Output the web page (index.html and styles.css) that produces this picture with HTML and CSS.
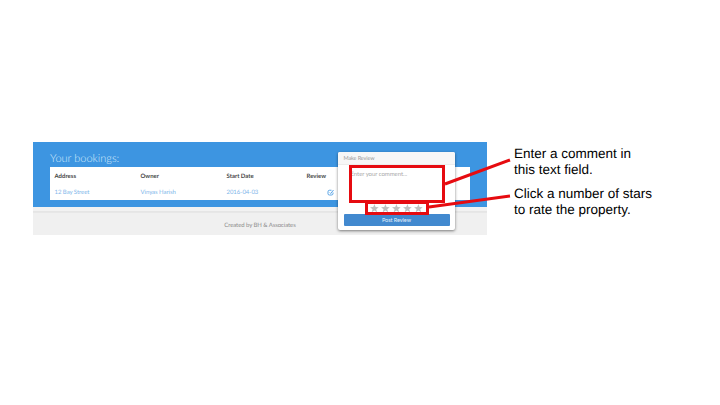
FILE: index.html
```html
<!DOCTYPE html>
<html lang="en">
<head>
<meta charset="utf-8">
<title>Make a review</title>
<link rel="stylesheet" href="styles.css">
</head>
<body>
<main class="slide">
  <section class="app">
    <div class="hero">
      <h1>Your bookings:</h1>
      <table class="bookings">
        <thead><tr><th class="address">Address</th><th class="owner">Owner</th><th class="date">Start Date</th><th>Review</th></tr></thead>
        <tbody><tr><td>12 Bay Street</td><td>Vinyas Harish</td><td>2016-04-03</td><td class="edit-cell"><svg class="edit" viewBox="0 0 14 14"><path d="M9 2.500H5Q2 2.500 2 5.500v4Q2 12 5 12h4q3 0 3-3V7M5.500 7l2 2L13 2"/></svg></td></tr></tbody>
      </table>
    </div>
    <footer><p>Created by BH &amp; Associates</p></footer>
    <form class="popover">
      <h2>Make Review</h2>
      <div class="popover-body">
        <div class="comment">Enter your comment...</div>
        <div class="stars">
          <svg viewBox="0 0 20 20"><path d="M10 0l2.6 6.8 7.3.4-5.700 4.600 1.900 7L10 14.900l-6.100 3.900 1.900-7L.1 7.200l7.300-.4z"/></svg>
          <svg viewBox="0 0 20 20"><path d="M10 0l2.6 6.8 7.3.4-5.700 4.600 1.900 7L10 14.900l-6.100 3.900 1.900-7L.1 7.200l7.300-.4z"/></svg>
          <svg viewBox="0 0 20 20"><path d="M10 0l2.6 6.8 7.3.4-5.700 4.600 1.900 7L10 14.900l-6.100 3.900 1.900-7L.1 7.200l7.300-.4z"/></svg>
          <svg viewBox="0 0 20 20"><path d="M10 0l2.6 6.8 7.3.4-5.700 4.600 1.900 7L10 14.900l-6.100 3.900 1.900-7L.1 7.200l7.300-.4z"/></svg>
          <svg viewBox="0 0 20 20"><path d="M10 0l2.6 6.8 7.3.4-5.700 4.600 1.900 7L10 14.900l-6.100 3.900 1.900-7L.1 7.200l7.300-.4z"/></svg>
        </div>
        <button type="button">Post Review</button>
      </div>
    </form>
  </section>
  <aside class="notes">
    <p>Enter a comment in<br>this text field.</p>
    <p>Click a number of stars<br>to rate the property.</p>
  </aside>
  <svg class="callouts" viewBox="0 0 720 405">
    <path d="M445 184L510 160M429 207L510 196"/>
    <rect x="350.500" y="166.500" width="93" height="35"/>
    <rect x="366.500" y="202.500" width="61" height="11"/>
  </svg>
</main>
</body>
</html>
```
FILE: styles.css
```css
* { box-sizing: border-box; }
body { margin: 0; background: #fff; text-rendering: geometricPrecision; }
h1, h2, p { margin: 0; font-weight: 400; }
.slide {
  position: relative;
  display: flex;
  align-items: flex-start;
  width: 720px;
  height: 405px;
  padding: 142px 0 0 33px;
  overflow: hidden;
}
.app {
  position: relative;
  width: 454px;
  height: 93px;
  background: #f0f0f0;
  font-family: Lato, sans-serif;
}
.hero { height: 65px; padding: 9px 17px 0; background: #3d95e1; }
h1 { height: 16px; font-size: 11px; line-height: 16px; font-weight: 300; color: #d3e9fb; }
.bookings {
  width: 420px;
  height: 33px;
  table-layout: fixed;
  border-collapse: collapse;
  background: #fff;
  font-size: 6px;
  line-height: 8px;
  text-align: left;
}
.bookings th { height: 17px; padding: 3px 0 0 4.500px; color: #484848; font-weight: 700; }
.bookings td { height: 16px; padding: 1px 0 0 4.500px; color: #7fb7ea; }
.bookings td { letter-spacing: -.05px; }
.address, .owner { width: 86px; }
.date { width: 80px; }
.edit-cell .edit { display: block; width: 7px; height: 7px; margin: -1px 0 0 20.500px; fill: none; stroke: #3d95e1; stroke-width: 1.700; }
footer {
  height: 28px;
  padding-top: 5px;
  background: linear-gradient(#f2f2f2 4px, #e4e4e4 4px, #e8e8e8 6px, #f0f0f0 6px);
}
footer p { padding-top: 9px; font-size: 6px; letter-spacing: -.08px; line-height: 9px; text-align: center; color: #8e8e8e; }
.popover {
  position: absolute;
  left: 305px;
  top: 10px;
  width: 117px;
  height: 78px;
  border-radius: 2px;
  background: #fff;
  box-shadow: 0 1px 3px rgba(0, 0, 0, .5);
}
h2 {
  height: 13px;
  padding: 1px 0 0 5.500px;
  border-bottom: 1px solid #ececec;
  border-radius: 2px 2px 0 0;
  background: #f7f7f7;
  font-size: 5.500px;
  letter-spacing: -.1px;
  line-height: 13px;
  color: #999;
}
.popover-body { display: flex; flex-direction: column; padding: 0 5.500px; }
.comment { height: 38px; padding: 5px 0 0 7px; font-size: 6px; letter-spacing: -.05px; line-height: 9px; color: #aaa; }
.stars { display: flex; justify-content: center; gap: 2.200px; height: 11px; align-items: center; }
.stars svg { width: 8.800px; height: 8.800px; fill: #c0c0c0; }
button {
  height: 12px;
  padding: 0;
  border: 0;
  border-radius: 1px;
  background: #4289cf;
  font: 5.500px/12px Lato, sans-serif;
  letter-spacing: -.05px;
  color: #e6f1fb;
}
.notes {
  display: flex;
  flex-direction: column;
  gap: 8px;
  padding: 4px 0 0 27px;
  font: 13.500px/16px "Liberation Sans", Arial, sans-serif;
  color: #000;
  white-space: nowrap;
}
.callouts { position: absolute; inset: 0; width: 720px; height: 405px; fill: none; stroke: #e60b10; stroke-width: 3; }
```
